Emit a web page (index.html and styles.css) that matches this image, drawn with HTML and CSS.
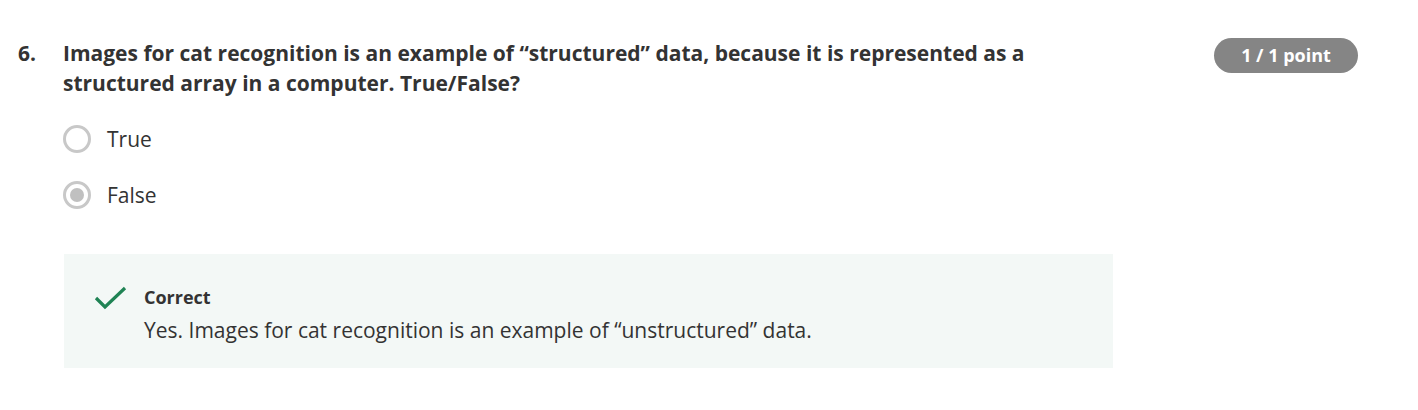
FILE: index.html
```html
<!DOCTYPE html>
<html lang="en">
<head>
<meta charset="UTF-8">
<meta name="viewport" content="width=device-width, initial-scale=1.0">
<title>Quiz question 6</title>
<link rel="stylesheet" href="styles.css">
</head>
<body>
<div class="question">
  <div class="question-head">
    <span class="number">6.</span>
    <div class="prompt">Images for cat recognition is an example of “structured” data, because it is represented as a structured array in a computer. True/False?</div>
    <span class="badge">1 / 1 point</span>
  </div>

  <div class="options">
    <label class="option">
      <span class="radio"></span>
      <span>True</span>
    </label>
    <label class="option">
      <span class="radio checked"></span>
      <span>False</span>
    </label>
  </div>

  <div class="feedback">
    <svg class="check" width="34" height="26" viewBox="0 0 34 26">
      <path d="M2 13 L11 22 L31 3" fill="none" stroke="#1f8354" stroke-width="3.2"/>
    </svg>
    <div class="feedback-text">
      <div class="feedback-title">Correct</div>
      <div>Yes. Images for cat recognition is an example of “unstructured” data.</div>
    </div>
  </div>
</div>
</body>
</html>
```

FILE: styles.css
```css
body {
    margin: 0;
    background: #fff;
    color: #333;
    font-family: "Open Sans", sans-serif;
}

.question {
    padding: 38px 60px 0 18px;
}

.question-head {
    display: flex;
    align-items: flex-start;
}

.number {
    width: 45px;
    flex-shrink: 0;
    font-size: 21px;
    font-weight: 700;
    line-height: 30px;
}

.prompt {
    width: 980px;
    font-size: 21px;
    font-weight: 700;
    line-height: 30px;
}

.badge {
    margin-left: auto;
    width: 144px;
    height: 35px;
    border-radius: 18px;
    background: #858585;
    color: #fff;
    font-size: 18px;
    font-weight: 700;
    line-height: 35px;
    text-align: center;
}

.options {
    display: flex;
    flex-direction: column;
    gap: 28px;
    margin: 27px 0 0 45px;
}

.option {
    display: flex;
    align-items: center;
    gap: 16px;
    font-size: 21px;
    line-height: 28px;
}

.radio {
    width: 22px;
    height: 22px;
    border: 3px solid #c8c8c8;
    border-radius: 50%;
    display: flex;
    justify-content: center;
    align-items: center;
}

.radio.checked::after {
    content: "";
    width: 14px;
    height: 14px;
    border-radius: 50%;
    background: #c0c0c0;
}

.feedback {
    display: flex;
    align-items: flex-start;
    gap: 16px;
    width: 1019px;
    margin: 45px 0 0 46px;
    padding: 30px 0 21px 30px;
    background: #f3f8f6;
}

.check {
    flex-shrink: 0;
    margin-top: 1px;
}

.feedback-text {
    font-size: 21px;
    line-height: 34px;
}

.feedback-title {
    margin-bottom: 3px;
    font-size: 18px;
    font-weight: 700;
    line-height: 26px;
}
```
